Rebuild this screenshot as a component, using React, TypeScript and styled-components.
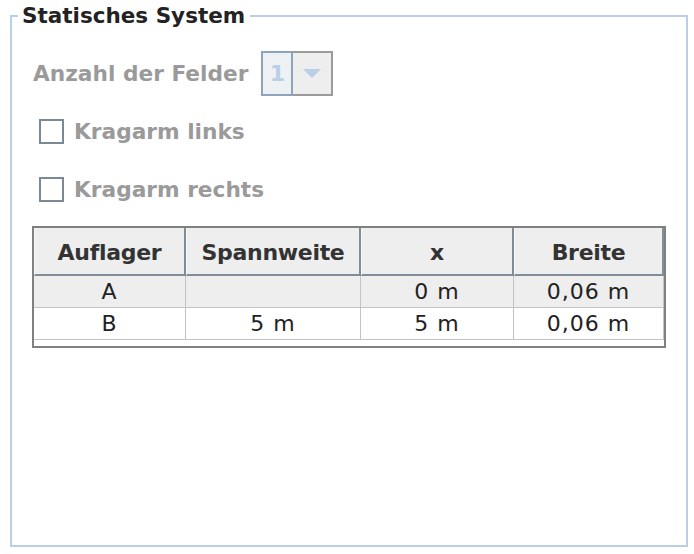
import styled, { createGlobalStyle } from 'styled-components'

const GlobalStyle = createGlobalStyle`
  html, body {
    margin: 0;
    padding: 0;
    background: #ffffff;
  }
  body {
    font-family: "DejaVu Sans", "Liberation Sans", sans-serif;
  }
`

const Panel = styled.fieldset`
  box-sizing: border-box;
  width: 678px;
  height: 544px;
  margin: 3px 0 0 10px;
  padding: 0;
  border: 2px solid #b8cfe5;
  min-width: 0;
`

const PanelTitle = styled.legend`
  margin-left: 6px;
  padding: 0 5px 0 4px;
  font-size: 21.5px;
  font-weight: bold;
  line-height: 26px;
  color: #222222;
`

const Content = styled.div`
  display: flex;
  flex-direction: column;
  padding: 22px 0 0 20px;
`

const FieldRow = styled.div`
  display: flex;
  align-items: center;
  gap: 13px;
  height: 45px;
  padding-left: 1px;
`

const Label = styled.span`
  font-size: 21.7px;
  font-weight: bold;
  color: #9a9a9a;
`

const Combo = styled.div`
  display: flex;
  height: 45px;
`

const ComboValue = styled.div`
  box-sizing: border-box;
  width: 32px;
  height: 45px;
  border: 2px solid #8ea4bb;
  background: #eef1f4;
  color: #b8cfe5;
  font-size: 22px;
  font-weight: bold;
  display: flex;
  align-items: center;
  justify-content: center;
`

const ComboArrow = styled.div`
  box-sizing: border-box;
  width: 40px;
  height: 45px;
  border: 2px solid #9a9a9a;
  border-left: none;
  background: #eeeeee;
  display: flex;
  align-items: center;
  justify-content: center;
`

const CheckRow = styled.label<{ $first?: boolean }>`
  display: flex;
  align-items: center;
  gap: 10px;
  height: 58px;
  padding-left: 7px;
  margin-top: ${p => (p.$first ? '6px' : '0')};
`

const CheckBox = styled.span`
  box-sizing: border-box;
  width: 25px;
  height: 25px;
  border: 2px solid #7b8896;
  background: #ffffff;
`

const TableFrame = styled.div`
  box-sizing: border-box;
  width: 634px;
  height: 122px;
  margin-top: 8px;
  border: 2px solid #808080;
  background: #ffffff;
`

const Grid = styled.table`
  border-collapse: separate;
  border-spacing: 0;
  width: 630px;
  table-layout: fixed;
`

const HeadCell = styled.th<{ $w: number }>`
  box-sizing: border-box;
  width: ${p => p.$w}px;
  height: 48px;
  padding: 2px 0 0;
  background: #eeeeee;
  border-right: 2px solid #7f8d9b;
  border-bottom: 2px solid #7f8d9b;
  border-left: 1px solid #f8f8f8;
  font-size: 22px;
  font-weight: bold;
  letter-spacing: -0.3px;
  color: #333333;
  text-align: center;
`

const DataRow = styled.tr<{ $shade?: boolean }>`
  background: ${p => (p.$shade ? '#eeeeee' : '#ffffff')};
`

const DataCell = styled.td`
  box-sizing: border-box;
  height: 32px;
  padding: 0;
  border-right: 1px solid #c4c4c4;
  border-bottom: 1px solid #c4c4c4;
  font-size: 22px;
  letter-spacing: 1px;
  color: #222222;
  text-align: center;
  line-height: 30px;
`

const columns = [
  { title: 'Auflager', width: 152 },
  { title: 'Spannweite', width: 175 },
  { title: 'x', width: 153 },
  { title: 'Breite', width: 150 },
]

const rows = [
  ['A', '', '0 m', '0,06 m'],
  ['B', '5 m', '5 m', '0,06 m'],
]

export default function App() {
  return (
    <>
      <GlobalStyle />
      <Panel>
        <PanelTitle>Statisches System</PanelTitle>
        <Content>
          <FieldRow>
            <Label>Anzahl der Felder</Label>
            <Combo>
              <ComboValue>1</ComboValue>
              <ComboArrow>
                <svg width="18" height="10" viewBox="0 0 18 10">
                  <polygon points="0,0 18,0 9,9" fill="#b8cfe5" />
                </svg>
              </ComboArrow>
            </Combo>
          </FieldRow>
          <CheckRow $first>
            <CheckBox />
            <Label>Kragarm links</Label>
          </CheckRow>
          <CheckRow>
            <CheckBox />
            <Label>Kragarm rechts</Label>
          </CheckRow>
          <TableFrame>
            <Grid>
              <thead>
                <tr>
                  {columns.map(c => (
                    <HeadCell key={c.title} $w={c.width}>{c.title}</HeadCell>
                  ))}
                </tr>
              </thead>
              <tbody>
                {rows.map((r, i) => (
                  <DataRow key={r[0]} $shade={i === 0}>
                    {r.map((v, j) => (
                      <DataCell key={j}>{v}</DataCell>
                    ))}
                  </DataRow>
                ))}
              </tbody>
            </Grid>
          </TableFrame>
        </Content>
      </Panel>
    </>
  )
}
